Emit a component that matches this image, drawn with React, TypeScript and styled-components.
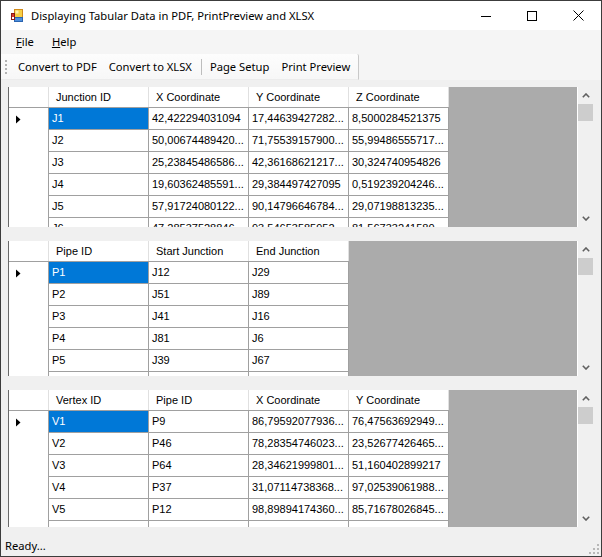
import React from 'react';
import styled, { createGlobalStyle } from 'styled-components';

const GlobalStyle = createGlobalStyle`
  html, body {
    margin: 0;
    padding: 0;
    background: #ffffff;
  }
  * {
    box-sizing: border-box;
  }
`;

const uiFont = `"Noto Sans", "Open Sans", sans-serif`;
const gridFont = `"Liberation Sans", Arial, sans-serif`;

const junctions = [
  ['J1', '42,422294031094', '17,44639427282...', '8,5000284521375'],
  ['J2', '50,00674489420...', '71,75539157900...', '55,99486555717...'],
  ['J3', '25,23845486586...', '42,36168621217...', '30,324740954826'],
  ['J4', '19,60362485591...', '29,384497427095', '0,519239204246...'],
  ['J5', '57,91724080122...', '90,14796646784...', '29,07198813235...'],
  ['J6', '47,28537528846...', '93,54653585952...', '81,56733241580...'],
];

const pipes = [
  ['P1', 'J12', 'J29'],
  ['P2', 'J51', 'J89'],
  ['P3', 'J41', 'J16'],
  ['P4', 'J81', 'J6'],
  ['P5', 'J39', 'J67'],
  ['P6', 'J45', 'J72'],
];

const vertices = [
  ['V1', 'P9', '86,79592077936...', '76,47563692949...'],
  ['V2', 'P46', '78,28354746023...', '23,52677426465...'],
  ['V3', 'P64', '28,34621999801...', '51,160402899217'],
  ['V4', 'P37', '31,07114738368...', '97,02539061988...'],
  ['V5', 'P12', '98,89894174360...', '85,71678026845...'],
  ['V6', 'P70', '12,57312804619...', '64,30917542260...'],
];

const Window = styled.div`
  width: 602px;
  height: 557px;
  border: 1px solid #3c3c3c;
  background: #f0f0f0;
  display: flex;
  flex-direction: column;
  overflow: hidden;
`;

const TitleBar = styled.div`
  height: 29px;
  flex: none;
  background: #ffffff;
  display: flex;
  align-items: center;
  padding-left: 9px;
`;

const TitleText = styled.span`
  margin-left: 7px;
  font: 11.2px ${uiFont};
  color: #000;
  white-space: nowrap;
`;

const Controls = styled.div`
  margin-left: auto;
  display: flex;
  height: 100%;
`;

const CtlButton = styled.div`
  width: 46px;
  height: 100%;
  display: flex;
  align-items: center;
  justify-content: center;
`;

const MenuBar = styled.div`
  height: 24px;
  flex: none;
  background: #f5f5f5;
  display: flex;
  align-items: center;
  padding-left: 6px;
`;

const MenuItem = styled.div`
  padding: 0 9px;
  font: 11.2px ${uiFont};
  color: #000;
  line-height: 20px;
`;

const ToolRow = styled.div`
  height: 26px;
  flex: none;
  background: #f5f5f5;
  display: flex;
`;

const ToolStrip = styled.div`
  display: flex;
  align-items: center;
  padding: 0 2px 0 4px;
  background: linear-gradient(#fdfdfd, #f7f7f7);
  border-right: 1px solid #c9c9c9;
  border-bottom: 1px solid #ececec;
  border-top-right-radius: 2px;
`;

const Grip = styled.div`
  display: flex;
  margin-right: 4px;
`;

const ToolButton = styled.div`
  padding: 0 6px;
  height: 22px;
  display: flex;
  align-items: center;
  font: 11.2px ${uiFont};
  color: #000;
  white-space: nowrap;
`;

const Separator = styled.div`
  width: 1px;
  height: 16px;
  margin: 0 2px 0 3px;
  background: #bdbdbd;
`;

const Content = styled.div`
  flex: 1;
  padding: 7px 7px 0 7px;
  display: flex;
  flex-direction: column;
  gap: 14px;
`;

const GridFrame = styled.div<{ $h: number }>`
  height: ${p => p.$h}px;
  flex: none;
  display: flex;
`;

const DataArea = styled.div`
  flex: 1;
  min-width: 0;
  background: #ababab;
  border-left: 1px solid #696969;
  overflow: hidden;
`;

const Table = styled.div`
  width: fit-content;
  display: flex;
  flex-direction: column;
`;

const HeaderRow = styled.div`
  display: flex;
  height: 21px;
  background: #ffffff;
  border-bottom: 1px solid #a0a0a0;
`;

const HeadCell = styled.div<{ $w: number }>`
  width: ${p => p.$w}px;
  border-right: 1px solid #e0e0e0;
  padding-left: 7px;
  font: 11px ${gridFont};
  color: #000;
  line-height: 20px;
  white-space: nowrap;
  overflow: hidden;
`;

const Row = styled.div`
  display: flex;
  height: 22px;
`;

const RowHead = styled.div`
  width: 40px;
  border-right: 1px solid #a0a0a0;
  background: #ffffff;
  display: flex;
  align-items: center;
  padding-left: 6px;
`;

const Cell = styled.div<{ $sel?: boolean }>`
  width: 100px;
  border-right: 1px solid #a0a0a0;
  border-bottom: 1px solid #a0a0a0;
  background: ${p => (p.$sel ? '#0078d7' : '#ffffff')};
  color: ${p => (p.$sel ? '#ffffff' : '#000000')};
  padding-left: 3px;
  font: 11px ${gridFont};
  line-height: 21px;
  white-space: nowrap;
  overflow: hidden;
`;

const VScroll = styled.div`
  width: 17px;
  flex: none;
  background: #f0f0f0;
  border-left: 1px solid #ffffff;
  display: flex;
  flex-direction: column;
`;

const ArrowBox = styled.div`
  height: 17px;
  flex: none;
  display: flex;
  align-items: center;
  justify-content: center;
`;

const Thumb = styled.div`
  height: 17px;
  width: 15px;
  flex: none;
  background: #cdcdcd;
`;

const Track = styled.div`
  flex: 1;
`;

const StatusBar = styled.div`
  height: 22px;
  flex: none;
  display: flex;
  align-items: center;
  padding-left: 4px;
  background: #f0f0f0;
`;

const StatusText = styled.span`
  font: 11.2px ${uiFont};
  color: #000;
`;

const SizeGrip = styled.div`
  margin-left: auto;
  align-self: flex-end;
  margin-bottom: 2px;
  margin-right: 2px;
  display: flex;
`;

const AppIcon = () => (
  <svg width="14" height="14" viewBox="0 0 14 14">
    <rect x="4.5" y="0.5" width="8" height="8" fill="#f7cf45" stroke="#d08a1a" />
    <rect x="5.5" y="1.5" width="3" height="3" fill="#fff3b0" />
    <rect x="4.5" y="8.5" width="8" height="4" fill="#4d8fdc" stroke="#2a64b0" />
    <rect x="1.5" y="4.5" width="3" height="6" fill="#d63a2e" stroke="#8a1a12" />
    <rect x="2" y="8" width="2" height="2" fill="#ffffff" />
  </svg>
);

const Chevron = ({ down }: { down?: boolean }) => (
  <svg width="8" height="5" viewBox="0 0 8 5">
    <polyline
      points={down ? '0.8,0.8 4,4 7.2,0.8' : '0.8,4.2 4,1 7.2,4.2'}
      fill="none"
      stroke="#606060"
      strokeWidth="1.6"
    />
  </svg>
);

const SelArrow = () => (
  <svg width="6" height="9" viewBox="0 0 6 9">
    <polygon points="1,0.5 5.5,4.5 1,8.5" fill="#000" />
  </svg>
);

type GridProps = { columns: string[]; rows: string[][]; height: number };

const DataGrid: React.FC<GridProps> = ({ columns, rows, height }) => (
  <GridFrame $h={height}>
    <DataArea>
      <Table>
        <HeaderRow>
          <HeadCell $w={40} />
          {columns.map(c => (
            <HeadCell key={c} $w={100}>
              {c}
            </HeadCell>
          ))}
        </HeaderRow>
        {rows.map((r, i) => (
          <Row key={r[0]}>
            <RowHead>{i === 0 && <SelArrow />}</RowHead>
            {r.map((v, j) => (
              <Cell key={j} $sel={i === 0 && j === 0}>
                {v}
              </Cell>
            ))}
          </Row>
        ))}
      </Table>
    </DataArea>
    <VScroll>
      <ArrowBox>
        <Chevron />
      </ArrowBox>
      <Thumb />
      <Track />
      <ArrowBox>
        <Chevron down />
      </ArrowBox>
    </VScroll>
  </GridFrame>
);

export default function App() {
  return (
    <>
      <GlobalStyle />
      <Window>
        <TitleBar>
          <AppIcon />
          <TitleText>Displaying Tabular Data in PDF, PrintPreview and XLSX</TitleText>
          <Controls>
            <CtlButton>
              <svg width="10" height="10" viewBox="0 0 10 10" shapeRendering="crispEdges">
                <line x1="0" y1="5.5" x2="10" y2="5.5" stroke="#000" />
              </svg>
            </CtlButton>
            <CtlButton>
              <svg width="10" height="10" viewBox="0 0 10 10" shapeRendering="crispEdges">
                <rect x="0.5" y="0.5" width="9" height="9" fill="none" stroke="#000" />
              </svg>
            </CtlButton>
            <CtlButton>
              <svg width="11" height="11" viewBox="0 0 11 11">
                <path d="M0.5 0.5 L10.5 10.5 M10.5 0.5 L0.5 10.5" stroke="#000" strokeWidth="1" />
              </svg>
            </CtlButton>
          </Controls>
        </TitleBar>

        <MenuBar>
          <MenuItem>
            <u>F</u>ile
          </MenuItem>
          <MenuItem>
            <u>H</u>elp
          </MenuItem>
        </MenuBar>

        <ToolRow>
          <ToolStrip>
            <Grip>
              <svg width="3" height="16" viewBox="0 0 3 16">
                {[1, 5, 9, 13].map(y => (
                  <rect key={y} x="0" y={y} width="2" height="2" fill="#b4b4b4" />
                ))}
              </svg>
            </Grip>
            <ToolButton>Convert to PDF</ToolButton>
            <ToolButton>Convert to XLSX</ToolButton>
            <Separator />
            <ToolButton>Page Setup</ToolButton>
            <ToolButton>Print Preview</ToolButton>
          </ToolStrip>
        </ToolRow>

        <Content>
          <DataGrid
            height={140}
            columns={['Junction ID', 'X Coordinate', 'Y Coordinate', 'Z Coordinate']}
            rows={junctions}
          />
          <DataGrid height={135} columns={['Pipe ID', 'Start Junction', 'End Junction']} rows={pipes} />
          <DataGrid
            height={137}
            columns={['Vertex ID', 'Pipe ID', 'X Coordinate', 'Y Coordinate']}
            rows={vertices}
          />
        </Content>

        <StatusBar>
          <StatusText>Ready...</StatusText>
          <SizeGrip>
            <svg width="10" height="10" viewBox="0 0 10 10">
              {[
                [8, 0],
                [4, 4],
                [8, 4],
                [0, 8],
                [4, 8],
                [8, 8],
              ].map(([x, y]) => (
                <rect key={`${x}-${y}`} x={x} y={y} width="2" height="2" fill="#b8b8b8" />
              ))}
            </svg>
          </SizeGrip>
        </StatusBar>
      </Window>
    </>
  );
}
